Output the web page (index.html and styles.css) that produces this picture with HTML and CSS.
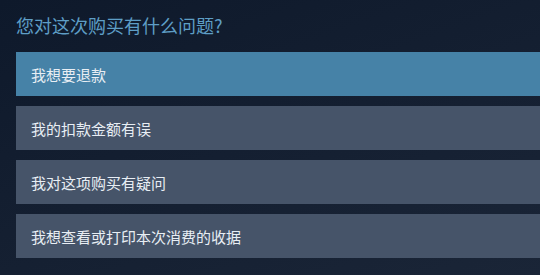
FILE: index.html
```html
<!DOCTYPE html>
<html lang="zh-CN">
<head>
<meta charset="utf-8">
<link rel="stylesheet" href="styles.css">
</head>
<body>
<div class="page">
  <h1 class="title">您对这次购买有什么问题?</h1>
  <div class="options">
    <div class="option active">我想要退款</div>
    <div class="option">我的扣款金额有误</div>
    <div class="option">我对这项购买有疑问</div>
    <div class="option">我想查看或打印本次消费的收据</div>
  </div>
</div>
</body>
</html>
```
FILE: styles.css
```css
html, body {
  margin: 0;
  padding: 0;
  width: 540px;
  height: 275px;
  overflow: hidden;
}
body {
  background: linear-gradient(160deg, #0e192b 0%, #141f31 50%, #1a2537 100%);
  font-family: "Noto Sans CJK SC", "Liberation Sans", sans-serif;
}
.page {
  padding: 12px 0 0 16px;
}
.title {
  margin: 0;
  font-size: 18px;
  font-weight: normal;
  line-height: 26px;
  color: #5e9ec6;
}
.options {
  margin-top: 14px;
  display: flex;
  flex-direction: column;
  gap: 10px;
}
.option {
  height: 44px;
  display: flex;
  align-items: center;
  padding-left: 15px;
  font-size: 15px;
  color: #e8eef4;
  background: #465469;
}
.option.active {
  background: #4682a7;
}
```
